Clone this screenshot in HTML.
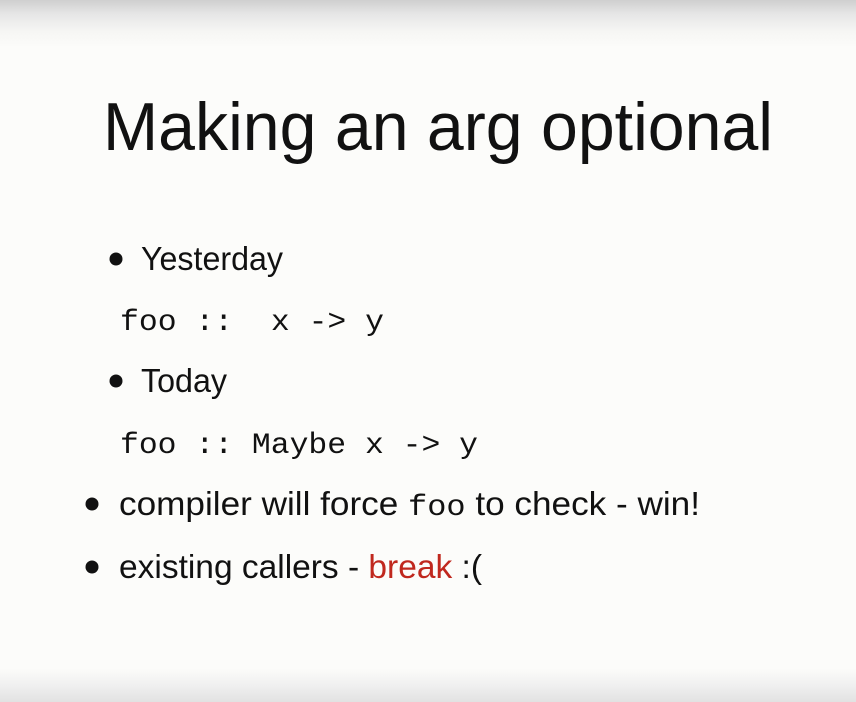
<!DOCTYPE html>
<html><head><meta charset="utf-8"><style>
html,body{margin:0;padding:0;width:856px;height:702px;overflow:hidden}
body{background:linear-gradient(to bottom,#cfcfcf 0px,#e6e6e6 14px,#f6f6f4 32px,#fcfcfa 48px,#fcfcfa 668px,#f0f0f0 685px,#e2e2e2 702px)}
svg{position:absolute;left:0;top:0}
text{fill:#111}
.s{font-family:"Liberation Sans",sans-serif}
.m{font-family:"Liberation Mono",monospace}
</style></head><body>
<svg width="856" height="702" xmlns="http://www.w3.org/2000/svg">
<text class="s" x="103" y="150" font-size="68" textLength="670" lengthAdjust="spacingAndGlyphs">Making an arg optional</text>
<circle cx="116" cy="259" r="6.5" fill="#111"/>
<text class="s" x="141" y="270" font-size="33" textLength="142" lengthAdjust="spacingAndGlyphs">Yesterday</text>
<text class="m" x="120" y="330" font-size="30" textLength="264" lengthAdjust="spacingAndGlyphs" xml:space="preserve">foo ::  x -&gt; y</text>
<circle cx="116" cy="381" r="6.5" fill="#111"/>
<text class="s" x="141" y="392" font-size="33" textLength="86" lengthAdjust="spacingAndGlyphs">Today</text>
<text class="m" x="120" y="453" font-size="30" textLength="358" lengthAdjust="spacingAndGlyphs">foo :: Maybe x -&gt; y</text>
<circle cx="92" cy="504" r="6.5" fill="#111"/>
<text x="119" y="515" font-size="33" textLength="581" lengthAdjust="spacingAndGlyphs"><tspan class="s">compiler will force </tspan><tspan class="m" font-size="30">foo</tspan><tspan class="s"> to check - win!</tspan></text>
<circle cx="92" cy="567" r="6.5" fill="#111"/>
<text class="s" x="119" y="578" font-size="33" textLength="363" lengthAdjust="spacingAndGlyphs">existing callers - <tspan style="fill:#c0281e">break</tspan> :(</text>
</svg>
</body></html>
